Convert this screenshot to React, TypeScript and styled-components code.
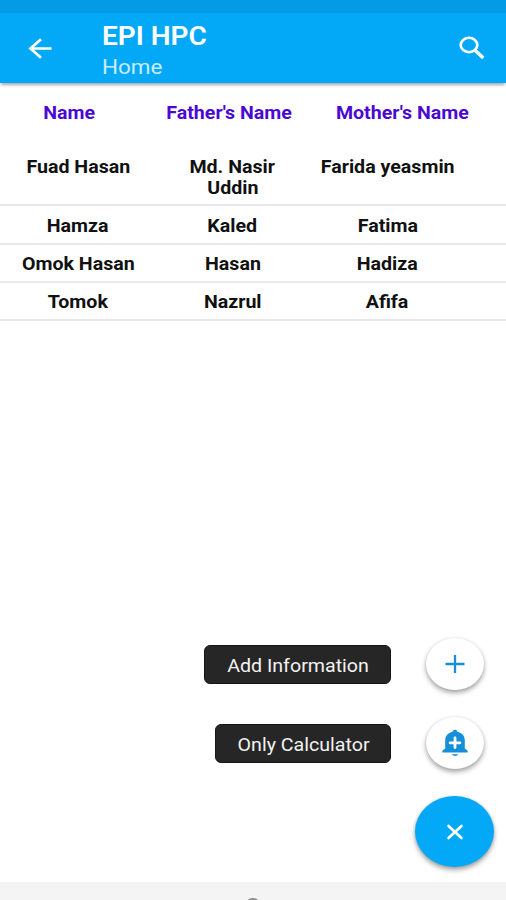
import React from "react";
import styled, { createGlobalStyle } from "styled-components";

const GlobalStyle = createGlobalStyle`
  * { box-sizing: border-box; }
  body { margin: 0; background: #fff; font-family: Roboto, "Liberation Sans", sans-serif; }
`;

const Screen = styled.div`
  width: 506px;
  height: 900px;
  display: flex;
  flex-direction: column;
  overflow: hidden;
  background: #fff;
`;

const StatusBar = styled.div`
  flex: none;
  height: 13px;
  background: #039be5;
`;

const AppBar = styled.header`
  flex: none;
  height: 70px;
  display: flex;
  align-items: center;
  padding: 0 20px 0 26px;
  background: #03a9f6;
  color: #fff;
  box-shadow: 0 3px 3px -1px rgba(0, 0, 0, 0.34);
`;

const IconButton = styled.button`
  display: flex;
  padding: 0;
  border: 0;
  background: none;
  color: inherit;
`;

const Titles = styled.div`
  flex: 1;
  padding: 8px 0 0 48px;
`;

/* Labels use a slightly expanded letterform. */
const Wide = styled.span<{ $ratio?: number; $origin?: string }>`
  display: inline-block;
  white-space: nowrap;
  transform: scaleX(${(p) => p.$ratio ?? 1.12});
  transform-origin: ${(p) => p.$origin ?? "center"};
`;

const Title = styled.h1`
  margin: 0;
  font-size: 25px;
  line-height: 30px;
  font-weight: 600;
`;

const Subtitle = styled.div`
  font-size: 21px;
  line-height: 30px;
  color: #c9ecfd;
`;

const HeadRow = styled.div`
  flex: none;
  height: 57px;
  display: grid;
  grid-template-columns: 138px 182px 165px;
  text-align: center;
  padding-top: 18px;
  font-size: 17.5px;
  line-height: 24px;
  font-weight: 700;
  color: #4a08d4;
`;

const Row = styled.div<{ $height: number; $top: number }>`
  flex: none;
  height: ${(p) => p.$height}px;
  padding-top: ${(p) => p.$top}px;
  display: grid;
  grid-template-columns: 156px 153px 157px;
  text-align: center;
  font-size: 17.5px;
  line-height: 21px;
  font-weight: 700;
  color: #111;
  border-bottom: 2px solid #e9e9e9;
`;

const Cell = styled.div`
  display: flex;
  flex-direction: column;
  align-items: center;
`;

const Actions = styled.div`
  flex: 1;
  display: flex;
  flex-direction: column;
  justify-content: flex-end;
  align-items: flex-end;
  padding: 0 12px 15px 0;
`;

const Action = styled.div`
  display: flex;
  align-items: center;
  gap: 35px;
  margin: 0 10px 27px 0;
`;

const Tip = styled.div<{ $width: number }>`
  width: ${(p) => p.$width}px;
  height: 39px;
  display: flex;
  align-items: center;
  justify-content: center;
  padding: 3px 0 0 1px;
  border-radius: 6px;
  background: #262626;
  border: 1px solid #161616;
  color: #f2f2f2;
  font-size: 18px;
  font-weight: 450;
`;

const MiniFab = styled.button`
  width: 58px;
  height: 52px;
  padding: 0;
  border: 0;
  border-radius: 50%;
  display: flex;
  align-items: center;
  justify-content: center;
  background: #fff;
  box-shadow: 0 3px 5px rgba(0, 0, 0, 0.34), 0 0 3px rgba(0, 0, 0, 0.1);
`;

const Fab = styled(MiniFab)`
  width: 79px;
  height: 71px;
  background: #03a9f6;
  box-shadow: 0 3px 5px rgba(0, 0, 0, 0.36), 0 0 3px rgba(0, 0, 0, 0.12);
`;

const BottomBar = styled.footer`
  flex: none;
  height: 18px;
  display: flex;
  align-items: flex-end;
  justify-content: center;
  background: #f4f4f4;
`;

type Person = { name: string; father: string[]; mother: string; height: number; top: number };

const people: Person[] = [
  { name: "Fuad Hasan", father: ["Md. Nasir", "Uddin"], mother: "Farida yeasmin", height: 66, top: 17 },
  { name: "Hamza", father: ["Kaled"], mother: "Fatima", height: 39, top: 10 },
  { name: "Omok Hasan", father: ["Hasan"], mother: "Hadiza", height: 38, top: 9 },
  { name: "Tomok", father: ["Nazrul"], mother: "Afifa", height: 38, top: 9 },
];

export default function App() {
  return (
    <Screen>
      <GlobalStyle />
      <StatusBar />
      <AppBar>
        <IconButton aria-label="Back">
          <svg width="28" height="24" viewBox="0 0 28 24" fill="none" stroke="#fff" strokeWidth="2.7">
            <path d="M25.5 12.5H4.5M15 3.2L4.5 12.5L15 21.8" />
          </svg>
        </IconButton>
        <Titles>
          <Title><Wide $origin="left">EPI HPC</Wide></Title>
          <Subtitle><Wide $origin="left" $ratio={1.07}>Home</Wide></Subtitle>
        </Titles>
        <IconButton aria-label="Search">
          <svg width="28" height="26" viewBox="0 0 28 26" fill="none" stroke="#fff">
            <ellipse cx="11" cy="10" rx="8.3" ry="7.2" strokeWidth="2.6" />
            <path d="M17 15.3L25.3 23" strokeWidth="3.4" />
          </svg>
        </IconButton>
      </AppBar>
      <HeadRow>
        {["Name", "Father's Name", "Mother's Name"].map((h) => (
          <Cell key={h}><Wide>{h}</Wide></Cell>
        ))}
      </HeadRow>
      {people.map((p) => (
        <Row key={p.name} $height={p.height} $top={p.top}>
          <Cell><Wide>{p.name}</Wide></Cell>
          <Cell>{p.father.map((l) => <Wide key={l}>{l}</Wide>)}</Cell>
          <Cell><Wide>{p.mother}</Wide></Cell>
        </Row>
      ))}
      <Actions>
        <Action>
          <Tip $width={187}><Wide $ratio={1.09}>Add Information</Wide></Tip>
          <MiniFab aria-label="Add information">
            <svg width="22" height="20" viewBox="0 0 22 20" stroke="#1590d8" strokeWidth="2.3">
              <path d="M1.5 10H20.5M11 1V19" />
            </svg>
          </MiniFab>
        </Action>
        <Action>
          <Tip $width={176}><Wide $ratio={1.09}>Only Calculator</Wide></Tip>
          <MiniFab aria-label="Only calculator">
            <svg width="26" height="28" viewBox="0 0 26 28" fill="#1590d8">
              <path d="M13 0.8C14.3 0.8 15.2 1.7 15.4 2.8C20 4 22.8 7 22.8 11.5V19.5L25.7 21.8V23.6H0.3V21.8L3.2 19.5V11.5C3.2 7 6 4 10.6 2.8C10.8 1.7 11.7 0.8 13 0.8Z" />
              <path d="M9.7 25.2H16.3Q15.5 27 13 27Q10.5 27 9.7 25.2Z" />
              <path d="M8.1 13.8H17.9M13 9V18.6" stroke="#fff" strokeWidth="2.8" strokeLinecap="round" />
            </svg>
          </MiniFab>
        </Action>
        <Fab aria-label="Close menu">
          <svg width="18" height="16" viewBox="0 0 18 16" stroke="#fff" strokeWidth="2.6" strokeLinecap="round">
            <path d="M2.5 2L15.5 14M15.5 2L2.5 14" />
          </svg>
        </Fab>
      </Actions>
      <BottomBar>
        <svg width="14" height="3" viewBox="0 0 14 3">
          <ellipse cx="7" cy="5" rx="6" ry="4" fill="#8c8c8c" />
        </svg>
      </BottomBar>
    </Screen>
  );
}
